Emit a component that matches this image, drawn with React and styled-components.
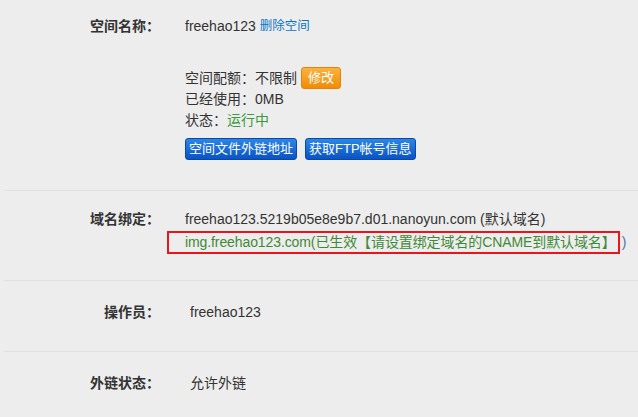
import React from "react";
import styled, { createGlobalStyle } from "styled-components";

const Global = createGlobalStyle`
  html, body { margin: 0; padding: 0; background: #ededed; }
  body {
    font-family: "Liberation Sans", Arial, "Noto Sans CJK SC", sans-serif;
    font-size: 14px;
    color: #333;
  }
`;

const Page = styled.div`
  width: 638px;
  height: 417px;
  overflow: hidden;
  padding-left: 4px;
  box-sizing: border-box;
`;

const Row = styled.div`
  display: grid;
  grid-template-columns: 156px 1fr;
  column-gap: ${(p) => p.$gap || 25}px;
  padding: ${(p) => p.$pad};
  border-bottom: ${(p) => (p.$last ? "none" : "1px solid #e0e0e0")};
`;

const Label = styled.div`
  text-align: right;
  font-weight: bold;
  line-height: ${(p) => p.$lh || 22}px;
  color: #333;
`;

const Value = styled.div`
  display: flex;
  flex-direction: column;
  align-items: flex-start;
`;

const Line = styled.div`
  line-height: ${(p) => p.$lh || 21}px;
  margin-top: ${(p) => p.$mt || 0}px;
  display: flex;
  align-items: center;
  white-space: nowrap;
  color: ${(p) => p.$color || "#333"};
`;

const Link = styled.a`
  color: #0a74c6;
  text-decoration: none;
  margin-left: 4px;
  font-size: 12.5px;
  cursor: pointer;
`;

const Green = styled.span`
  color: #3b9a3b;
`;

const OrangeButton = styled.button`
  margin-left: 4px;
  height: 22px;
  padding: 0 6px;
  font: inherit;
  font-size: 13px;
  line-height: 18px;
  color: #fff;
  background: linear-gradient(#fbb23f, #f08c06);
  border: 1px solid #e2840a;
  border-radius: 3px;
`;

const ButtonBar = styled.div`
  display: flex;
  gap: 8px;
  margin-top: 7px;
`;

const BlueButton = styled.button`
  height: 22px;
  padding: 0 3px;
  font: inherit;
  font-size: 13px;
  line-height: 18px;
  color: #fff;
  background: linear-gradient(#2b86e6, #0a53c3);
  border: 1px solid #0a47a6;
  border-radius: 3px;
`;

const Boxed = styled.span`
  display: inline-block;
  margin-left: -18px;
  padding: 0 2px 0 16px;
  line-height: 19px;
  letter-spacing: -0.1px;
  border: 2px solid #e8151d;
  color: #3f8a36;
`;

const Paren = styled.span`
  margin-left: 2px;
  color: #4f74a0;
`;

export default function App() {
  return (
    <>
      <Global />
      <Page>
        <Row $pad="15px 0 30px">
          <Label $lh={22}>空间名称：</Label>
          <Value>
            <Line $lh={22}>
              freehao123<Link>删除空间</Link>
            </Line>
            <Line $lh={22} $mt={30}>
              空间配额：不限制<OrangeButton>修改</OrangeButton>
            </Line>
            <Line>已经使用：0MB</Line>
            <Line>
              状态：<Green>运行中</Green>
            </Line>
            <ButtonBar>
              <BlueButton>空间文件外链地址</BlueButton>
              <BlueButton>获取FTP帐号信息</BlueButton>
            </ButtonBar>
          </Value>
        </Row>
        <Row $pad="17px 0 26px">
          <Label $lh={23}>域名绑定：</Label>
          <Value>
            <Line $lh={23}>freehao123.5219b05e8e9b7.d01.nanoyun.com (默认域名)</Line>
            <Line $lh={23}>
              <Boxed>img.freehao123.com(已生效【请设置绑定域名的CNAME到默认域名】</Boxed>
              <Paren>)</Paren>
            </Line>
          </Value>
        </Row>
        <Row $pad="20px 0 28px" $gap={30}>
          <Label>操作员：</Label>
          <Value>
            <Line $lh={22}>freehao123</Line>
          </Value>
        </Row>
        <Row $pad="20px 0 20px" $gap={30} $last>
          <Label>外链状态：</Label>
          <Value>
            <Line $lh={22}>允许外链</Line>
          </Value>
        </Row>
      </Page>
    </>
  );
}
